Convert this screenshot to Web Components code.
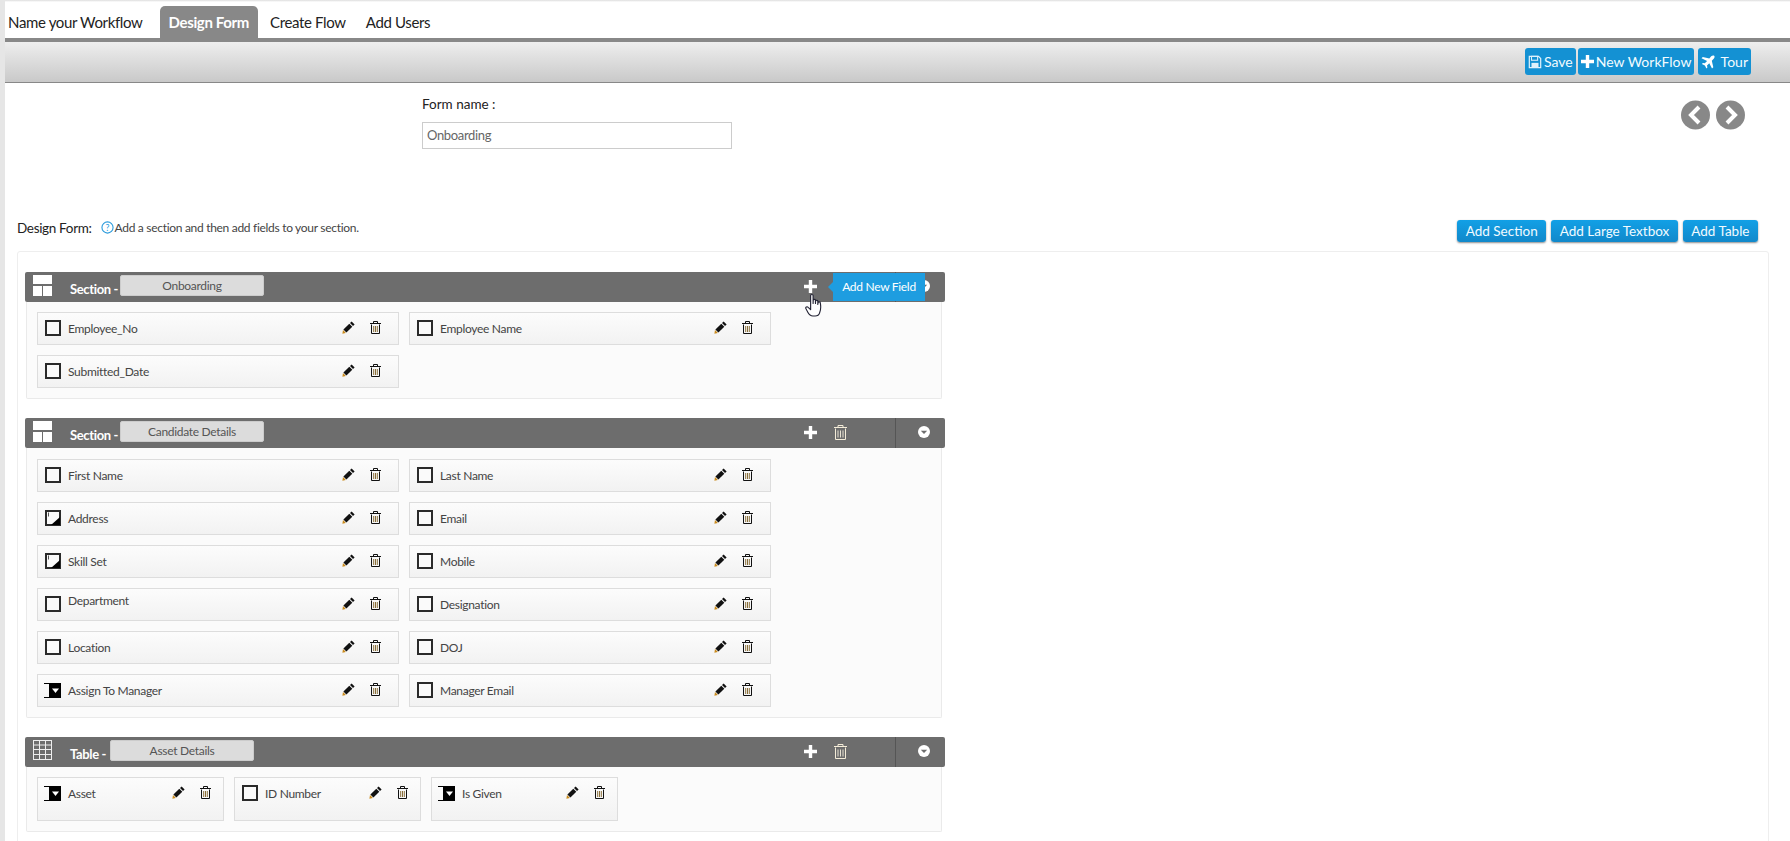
<!DOCTYPE html>
<html>
<head>
<meta charset="utf-8">
<style>
  html, body { margin: 0; height: 100%; overflow: hidden; background: #fff; }
  body { font-family: Lato, "Noto Sans", sans-serif; color: #222; }
</style>
</head>
<body>
<wf-app></wf-app>

<script>
const ICONS = {
  save: `<svg width="14" height="14" viewBox="0 0 16 16"><path fill="none" stroke="#dff1fb" stroke-width="1.4" d="M1.5 1.5h10.5l2.5 2.5v10.5h-13z"/><rect x="4" y="1.5" width="7" height="4.5" fill="none" stroke="#dff1fb" stroke-width="1.2"/><rect x="4" y="9" width="8" height="5.5" fill="#dff1fb"/></svg>`,
  plus: `<svg width="13" height="13" viewBox="0 0 13 13"><path fill="#fff" d="M4.8 0h3.4v4.8H13v3.4H8.2V13H4.8V8.2H0V4.8h4.8z"/></svg>`,
  plane: `<svg width="14" height="14" viewBox="0 0 14 14"><path fill="#fff" d="M13.2.8c.8.8.3 2.2-.5 3L10.8 5.7l1.5 6.5-1.3 1.3-2.7-5.3L6 10.5l.4 1.9-1 1-1.500-3-3-1.500 1-1 1.900.4 2.300-2.300L.5 3.300 1.800 2l6.500 1.500L10.200 1.300c.8-.8 2.200-1.300 3-.5z"/></svg>`,
  pencil: `<svg width="13" height="13" viewBox="0 0 13 13"><path fill="#111" d="M9.6.4l3 3-1.600 1.600-3-3z"/><path fill="#111" d="M7.300 2.700l3 3-5.900 5.900-3-3z"/><path fill="#c98a1c" d="M1 9.100l2.900 2.900-3.500.8z"/></svg>`,
  trash: `<svg width="11" height="13" viewBox="0 0 11 13"><path fill="none" stroke="#111" d="M1.500 3.500v9h8v-9M0 2.500h11M3.500 2V.5h4V2"/><path stroke="#7d5f24" stroke-width=".9" d="M3.700 5v6M5.500 5v6M7.300 5v6"/></svg>`,
  trashLight: `<svg width="13" height="15" viewBox="0 0 13 15"><path fill="none" stroke="#f4ecd8" d="M1.500 3.500v11h10v-11M0 2.500h13M4 2V.5h5V2"/><path stroke="#e8e2d2" d="M4 5.500v7M6.500 5.500v7M9 5.500v7"/></svg>`,
  layout: `<svg width="19" height="21" viewBox="0 0 19 21"><path fill="#fff" d="M0 0h19v9H0zM0 11h9v10H0zM10 11h9v10h-9z"/></svg>`,
  grid: `<svg width="19" height="20" viewBox="0 0 19 20"><rect x=".5" y=".5" width="18" height="19" fill="none" stroke="#eee"/><path stroke="#eee" fill="none" d="M.5 5h18M.5 9.500h18M.5 14.500h18M6.500.5v19M12.500.5v19"/></svg>`,
  box: `<svg width="16" height="16" viewBox="0 0 16 16"><rect x="1" y="1" width="14" height="14" fill="#fafafa" stroke="#2a2a2a" stroke-width="2"/></svg>`,
  area: `<svg width="16" height="16" viewBox="0 0 16 16"><rect x="1" y="1" width="14" height="14" fill="#fafafa" stroke="#2a2a2a" stroke-width="2"/><path fill="#000" d="M15 7v8H6z"/><path stroke="#555" d="M3.500 2.500v4"/></svg>`,
  drop: `<svg class="dd" width="17" height="15" viewBox="0 0 17 15"><path fill="#000" d="M0 0h6v15H0v-1h5V1H0z"/><path fill="#000" d="M6 0h11v15H6z"/><path fill="#fff" d="M8 5.500h7L11.500 10z"/></svg>`
};

class WfTabs extends HTMLElement {
  connectedCallback() {
    this.attachShadow({ mode: 'open' });
    const active = this.getAttribute('active');
    const names = this.getAttribute('names').split('|');
    this.shadowRoot.innerHTML = `
    <style>
      :host { display: flex; height: 32px; padding: 6px 0 0 3px; background: linear-gradient(#ddd 0, #fff 2px); }
      a { display: block; padding: 0 10px; font-size: 15px; letter-spacing: -.35px; line-height: 32px; color: #222; white-space: nowrap; }
      a:first-of-type { padding-left: 0; padding-right: 7px; }
      a.on { margin-left: 10px; }
      a.on + a { margin-left: 2px; }
      .on { padding: 0 9px; background: #888; color: #fff; font-weight: 700; border-radius: 5px 5px 0 0; }
    </style>
    ${names.map(n => `<a class="${n === active ? 'on' : ''}">${n}</a>`).join('')}`;
  }
}

class WfButton extends HTMLElement {
  connectedCallback() {
    this.attachShadow({ mode: 'open' });
    const icon = this.getAttribute('icon');
    this.shadowRoot.innerHTML = `
    <style>
      :host { display: inline-flex; align-items: center; box-sizing: border-box; height: 27px; padding: 0 3px; gap: 2px;
        background: #1491d3; color: #f2fbff; font-size: 14px; border-radius: 3px; white-space: nowrap; }
      :host([raised]) { height: 22px; padding: 0 8.5px; font-size: 13.5px; background: linear-gradient(#12a0e6, #1188ca);
        box-shadow: 0 1px 2px rgba(0,0,0,.45); }
      svg { display: block; }
    </style>
    ${icon ? ICONS[icon] : ''}<slot></slot>`;
  }
}

class WfToolbar extends HTMLElement {
  connectedCallback() {
    this.attachShadow({ mode: 'open' });
    this.shadowRoot.innerHTML = `
    <style>
      :host { display: flex; justify-content: flex-end; box-sizing: border-box; height: 45px; padding: 6px 39px 0 0;
        border-top: 4px solid #888; border-bottom: 1px solid #888; background: linear-gradient(#eee, #c9c9c9); }
      ::slotted(*) { margin-left: 2px; }
      ::slotted(:last-child) { margin-left: 4px; }
    </style>
    <slot></slot>`;
  }
}

class WfFormName extends HTMLElement {
  connectedCallback() {
    this.attachShadow({ mode: 'open' });
    this.shadowRoot.innerHTML = `
    <style>
      :host { display: block; width: 310px; font-size: 13.5px; }
      label { display: block; line-height: 18px; margin-bottom: 9px; color: #222; }
      .in { box-sizing: border-box; height: 27px; line-height: 25px; padding-left: 4px; border: 1px solid #ccc;
        font-size: 13px; letter-spacing: -.35px; color: #666; }
    </style>
    <label>Form name :</label>
    <div class="in">${this.getAttribute('value')}</div>`;
  }
}

class WfPager extends HTMLElement {
  connectedCallback() {
    this.attachShadow({ mode: 'open' });
    this.shadowRoot.innerHTML = `
    <style>
      :host { display: flex; gap: 6px; }
      svg { display: block; }
    </style>
    <svg width="29" height="30" viewBox="0 0 29 30"><circle cx="14.5" cy="15" r="14.500" fill="#888"/><path fill="none" stroke="#fff" stroke-width="4" d="M18 7l-8 8 8 8"/></svg>
    <svg width="29" height="30" viewBox="0 0 29 30"><circle cx="14.5" cy="15" r="14.500" fill="#888"/><path fill="none" stroke="#fff" stroke-width="4" d="M11 7l8 8-8 8"/></svg>`;
  }
}

class WfField extends HTMLElement {
  connectedCallback() {
    this.attachShadow({ mode: 'open' });
    const type = this.getAttribute('type') || 'box';
    const lift = this.hasAttribute('lift') ? 'lift' : '';
    this.shadowRoot.innerHTML = `
    <style>
      :host { display: flex; align-items: flex-start; box-sizing: border-box; height: 33px; padding: 7px 0 0 7px;
        border: 1px solid #ddd; background: linear-gradient(#fcfcfc, #f2f2f2); font-size: 12px; letter-spacing: -.3px; color: #444; }
      :host([tall]) { height: 44px; }
      .ic { width: 16px; height: 16px; flex: none; }
      svg { display: block; }
      .dd { margin: 1px 0 0 -1px; }
      .t { flex: 1; margin: 1px 0 0 7px; line-height: 16px; white-space: nowrap; }
      .t.lift { margin-top: -3px; }
      .pen { margin: 1px 0 0 0; }
      .bin { margin: 1px 17px 0 15px; }
      :host([tall]) .bin { margin-right: 12px; }
    </style>
    <span class="ic">${ICONS[type]}</span>
    <span class="t ${lift}"><slot></slot></span>
    <span class="pen">${ICONS.pencil}</span>
    <span class="bin">${ICONS.trash}</span>`;
  }
}

class WfSection extends HTMLElement {
  connectedCallback() {
    this.attachShadow({ mode: 'open' });
    const kind = this.getAttribute('kind') || 'Section';
    const table = kind === 'Table';
    const hint = this.hasAttribute('hint');
    this.shadowRoot.innerHTML = `
    <style>
      :host { display: block; width: 920px; margin-bottom: 19px; }
      header { position: relative; display: flex; align-items: center; box-sizing: border-box; height: 30px; padding-left: 8px;
        background: #6d6d6d; border-radius: 2px; color: #fff; }
      .sym { width: 19px; height: 21px; margin-top: -4px; }
      svg { display: block; }
      .kind { margin-left: 18px; font-size: 13px; letter-spacing: -.35px; font-weight: 700; padding-top: 4px; white-space: nowrap; width: 50px; }
      .kind.tbl { width: 40px; }
      .name { box-sizing: border-box; width: 144px; height: 21px; line-height: 20px; margin: -4px 0 0 0; text-align: center;
        font-size: 12px; letter-spacing: -.3px; color: #555; background: #dcdcdc; border: 1px solid #ccc; border-radius: 2px; }
      .add { margin-left: auto; margin-top: -1px; }
      .del { margin: -1px 48px 0 17px; width: 13px; }
      .tog { display: flex; align-items: center; justify-content: center; box-sizing: border-box; width: 50px; height: 30px; padding-left: 6px; border-left: 1px solid #555; }
      .tog svg { margin-top: -2px; }
      .body { box-sizing: border-box; margin: 0 3px 0 1px; padding: 10px; background: #fbfbfb;
        border: 1px solid #eaeaea; border-top: 0; border-radius: 0 0 2px 2px; }
      .tip { position: absolute; left: 808px; top: 1px; width: 92px; height: 28px; line-height: 28px; text-align: center;
        background: #1e9de0; color: #fff; font-size: 12px; letter-spacing: -.3px; }
      .tip::before { content: ""; position: absolute; left: -5px; top: 9px; border: 5px solid transparent; border-left: 0; border-right-color: #1e9de0; }
      .hand { position: absolute; left: 780px; top: 21px; }
    </style>
    <header>
      <span class="sym">${table ? ICONS.grid : ICONS.layout}</span>
      <span class="kind ${table ? 'tbl' : ''}">${kind} -</span>
      <span class="name">${this.getAttribute('name')}</span>
      <span class="add">${ICONS.plus}</span>
      <span class="del">${ICONS.trashLight}</span>
      <span class="tog"><svg width="12" height="12" viewBox="0 0 12 12"><circle cx="6" cy="6" r="6" fill="#fff"/><path fill="#6d6d6d" d="M2.800 4.800h6.400L6 8z"/></svg></span>
      ${hint ? `<span class="tip">Add New Field</span>
      <svg class="hand" width="18" height="25" viewBox="0 0 16 24" preserveAspectRatio="none"><path fill="#fff" stroke="#223" stroke-width="1" stroke-linejoin="round" d="M5 2.500c0-1.500 2.200-1.500 2.200 0V10l.1-3c0-1.200 2-1.200 2 0v3l.1-2.200c0-1.200 2-1.200 2 0V11l.2-1.600c0-1.200 2-1.200 2 0 .6 3.600.6 6.600-.6 9.600-.5 1.800-2 3-4 3H7c-2 0-3.500-1.500-4.500-3.500L.8 15c-.6-1.300 1-2.500 2-1.200L5 16z"/></svg>` : ''}
    </header>
    <div class="body"><slot></slot></div>`;
  }
}

class WfFieldGrid extends HTMLElement {
  connectedCallback() {
    this.attachShadow({ mode: 'open' });
    const cols = this.getAttribute('cols');
    const w = this.getAttribute('w');
    this.shadowRoot.innerHTML = `
    <style>
      :host { display: grid; grid-template-columns: repeat(${cols}, ${w}px); gap: 10px; }
    </style>
    <slot></slot>`;
  }
}

class WfApp extends HTMLElement {
  connectedCallback() {
    this.attachShadow({ mode: 'open' });
    this.shadowRoot.innerHTML = `
    <style>
      :host { display: block; height: 841px; overflow: hidden; border-left: 5px solid #e6e6e6; }
      .top { display: flex; height: 100px; }
      wf-form-name { margin: 12px 0 0 417px; }
      wf-pager { margin: 17px 45px 0 auto; }
      .head { display: flex; align-items: flex-start; height: 31px; margin: 37px 32px 0 12px; }
      .q { margin: 1px 1px 0 9px; }
      .q svg { display: block; }
      .help { font-size: 12px; letter-spacing: -.3px; color: #444; line-height: 16px; }
      .lab { font-size: 13.5px; letter-spacing: -.33px; line-height: 16px; }
      .acts { margin-left: auto; display: flex; gap: 5px; }
      .wrap { box-sizing: border-box; margin-left: 12px; width: 1752px; padding: 20px 7px 0; border: 1px solid #eee; border-radius: 3px; height: 620px; }
      .second { margin-top: 1px; }
    </style>
    <wf-tabs names="Name your Workflow|Design Form|Create Flow|Add Users" active="Design Form"></wf-tabs>
    <wf-toolbar>
      <wf-button icon="save">Save</wf-button>
      <wf-button icon="plus">New WorkFlow</wf-button>
      <wf-button icon="plane">&nbsp;Tour</wf-button>
    </wf-toolbar>
    <div class="top">
      <wf-form-name value="Onboarding"></wf-form-name>
      <wf-pager></wf-pager>
    </div>
    <div class="head">
      <span class="lab">Design Form:</span>
      <span class="q"><svg width="13" height="13" viewBox="0 0 14 14"><circle cx="7" cy="7" r="6" fill="none" stroke="#2b9bdc" stroke-width="1.2"/><text x="7" y="10.500" text-anchor="middle" font-size="9.500" fill="#2b9bdc">?</text></svg></span>
      <span class="help">Add a section and then add fields to your section.</span>
      <span class="acts">
        <wf-button raised>Add Section</wf-button>
        <wf-button raised>Add Large Textbox</wf-button>
        <wf-button raised>Add Table</wf-button>
      </span>
    </div>
    <div class="wrap">
      <wf-section name="Onboarding" hint>
        <wf-field-grid cols="2" w="362">
          <wf-field>Employee_No</wf-field>
          <wf-field>Employee Name</wf-field>
          <wf-field>Submitted_Date</wf-field>
        </wf-field-grid>
      </wf-section>
      <wf-section name="Candidate Details">
        <wf-field-grid class="second" cols="2" w="362">
          <wf-field>First Name</wf-field>
          <wf-field>Last Name</wf-field>
          <wf-field type="area">Address</wf-field>
          <wf-field>Email</wf-field>
          <wf-field type="area">Skill Set</wf-field>
          <wf-field>Mobile</wf-field>
          <wf-field lift>Department</wf-field>
          <wf-field>Designation</wf-field>
          <wf-field>Location</wf-field>
          <wf-field>DOJ</wf-field>
          <wf-field type="drop">Assign To Manager</wf-field>
          <wf-field>Manager Email</wf-field>
        </wf-field-grid>
      </wf-section>
      <wf-section name="Asset Details" kind="Table">
        <wf-field-grid cols="3" w="187">
          <wf-field type="drop" tall>Asset</wf-field>
          <wf-field tall>ID Number</wf-field>
          <wf-field type="drop" tall>Is Given</wf-field>
        </wf-field-grid>
      </wf-section>
    </div>`;
  }
}

customElements.define('wf-tabs', WfTabs);
customElements.define('wf-button', WfButton);
customElements.define('wf-toolbar', WfToolbar);
customElements.define('wf-form-name', WfFormName);
customElements.define('wf-pager', WfPager);
customElements.define('wf-field', WfField);
customElements.define('wf-field-grid', WfFieldGrid);
customElements.define('wf-section', WfSection);
customElements.define('wf-app', WfApp);
</script>
</body>
</html>
